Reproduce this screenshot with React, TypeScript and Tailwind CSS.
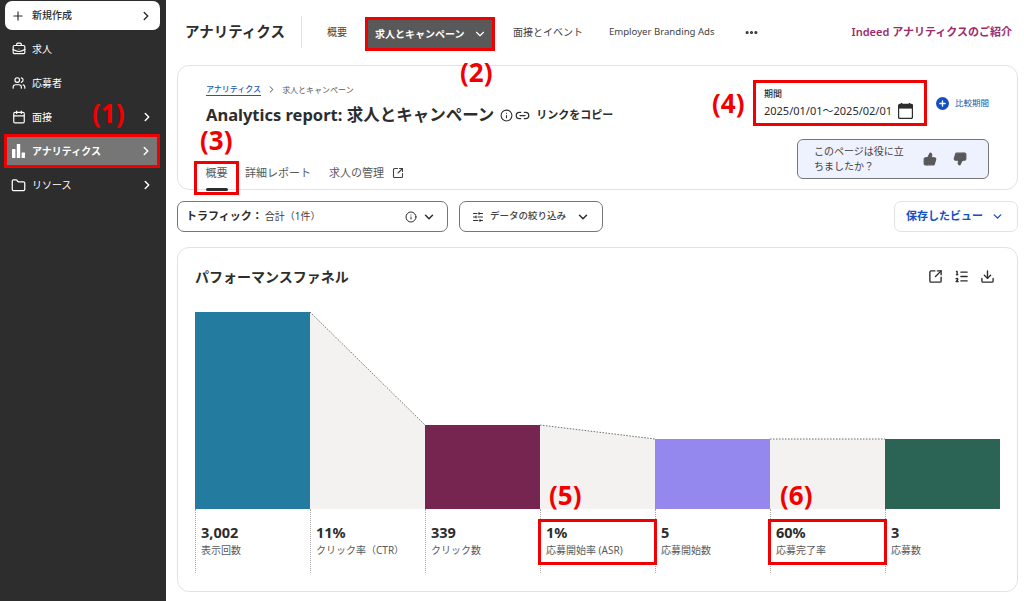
import {
  BriefcaseBusiness,
  Calendar,
  ChevronDown,
  ChevronRight,
  Download,
  Folder,
  Info,
  Link2,
  ListOrdered,
  MoreHorizontal,
  Plus,
  SlidersHorizontal,
  SquareArrowOutUpRight,
  ThumbsDown,
  ThumbsUp,
  Users,
} from "lucide-react";

const sideItems = [
  { label: "求人", icon: BriefcaseBusiness, arrow: false },
  { label: "応募者", icon: Users, arrow: false },
  { label: "面接", icon: Calendar, arrow: true },
];

const funnelStats = [
  { value: "3,002", label: "表示回数" },
  { value: "11%", label: "クリック率（CTR）" },
  { value: "339", label: "クリック数" },
  { value: "1%", label: "応募開始率 (ASR)", boxed: true },
  { value: "5", label: "応募開始数" },
  { value: "60%", label: "応募完了率", boxed: true },
  { value: "3", label: "応募数" },
];

function Mark({ text, className }: { text: string; className: string }) {
  return (
    <span
      className={`absolute text-[26px] leading-none font-bold text-[#f00000] ${className}`}
    >
      {text}
    </span>
  );
}

function BarsIcon() {
  return (
    <svg viewBox="0 0 13 14" className="h-[14px] w-[13px] fill-white">
      <rect x="0" y="5" width="3.4" height="9" rx="0.5" />
      <rect x="4.8" y="0" width="3.4" height="14" rx="0.5" />
      <rect x="9.6" y="8.5" width="3.4" height="5.5" rx="0.5" />
    </svg>
  );
}

function DateIcon() {
  return (
    <svg viewBox="0 0 15 16" className="ml-[6px] h-[16px] w-[15px] text-[#2d2d2d]">
      <path d="M3.5 0v3M11.5 0v3" stroke="currentColor" strokeWidth="1.6" />
      <path
        d="M2 1.5h11a1.5 1.5 0 0 1 1.5 1.5v11a1.5 1.5 0 0 1-1.5 1.5H2A1.5 1.5 0 0 1 .5 14V3A1.5 1.5 0 0 1 2 1.5Z"
        fill="none"
        stroke="currentColor"
        strokeWidth="1.4"
      />
      <rect x="1" y="2" width="13" height="3.6" fill="currentColor" />
    </svg>
  );
}

function Sidebar() {
  return (
    <aside className="relative w-[166px] shrink-0 bg-[#2d2d2d] px-[5px] pt-[1px] text-white">
      <button className="flex h-[29px] w-[155px] items-center rounded-[7px] bg-white pl-[6px] pr-[7px] text-[#2d2d2d]">
        <Plus size={14} strokeWidth={2} />
        <span className="ml-[7px] text-[10px] font-medium">新規作成</span>
        <ChevronRight size={14} strokeWidth={2.5} className="ml-auto" />
      </button>
      <div className="mt-[2px]">
        {sideItems.map((item) => (
          <div key={item.label} className="flex h-[34px] items-center pl-[7px] pr-[7px]">
            <item.icon size={14} strokeWidth={2} />
            <span className="ml-[6px] text-[10px]">{item.label}</span>
            {item.arrow && <ChevronRight size={14} strokeWidth={2.5} className="ml-auto" />}
          </div>
        ))}
        <div className="-ml-[1px] flex h-[34px] w-[156px] items-center border-[3px] border-[#f00000] bg-[#767676] pl-[5px] pr-[4px]">
          <BarsIcon />
          <span className="ml-[7px] text-[10px] font-bold">アナリティクス</span>
          <ChevronRight size={14} strokeWidth={2.5} className="ml-auto" />
        </div>
        <div className="flex h-[34px] items-center pl-[6px] pr-[7px]">
          <Folder size={15} strokeWidth={2} />
          <span className="ml-[6px] text-[10px]">リソース</span>
          <ChevronRight size={14} strokeWidth={2.5} className="ml-auto" />
        </div>
      </div>
      <Mark text="(1)" className="left-[92px] top-[100px]" />
    </aside>
  );
}

function TopNav() {
  return (
    <nav className="relative flex h-[64px] items-center pl-[19px] pr-[12px] text-[#424242]">
      <h1 className="text-[14.5px] font-bold text-[#2d2d2d]">アナリティクス</h1>
      <div className="ml-[16px] h-[32px] w-px bg-[#e4e2e0]" />
      <span className="ml-[25px] text-[10px]">概要</span>
      <div className="ml-[18px] mt-[4px] flex h-[34px] w-[130px] items-center border-[3px] border-[#f00000] bg-[#595959] pl-[7px] text-[10px] font-bold text-white">
        求人とキャンペーン
        <ChevronDown size={14} strokeWidth={2} className="ml-[9px]" />
      </div>
      <span className="ml-[18px] text-[10px]">面接とイベント</span>
      <span className="ml-[26px] text-[9.6px]">Employer Branding Ads</span>
      <MoreHorizontal size={15} strokeWidth={3} className="ml-[29px] text-[#2d2d2d]" />
      <span className="ml-auto text-[11px] font-semibold text-[#9d2b6b]">Indeed アナリティクスのご紹介</span>
    </nav>
  );
}

function ReportHeader() {
  return (
    <section className="relative ml-[11px] mr-[6px] mt-[1px] flex h-[125px] justify-between rounded-[12px] border border-[#e4e2e0] bg-white pl-[28px] pr-[28px]">
      <div className="flex flex-col">
        <div className="mt-[17px] flex items-center text-[8px] text-[#595959]">
          <span className="border-b border-[#2557a7] font-medium text-[#2557a7]">アナリティクス</span>
          <ChevronRight size={11} strokeWidth={2} className="mx-[5px] text-[#424242]" />
          <span>求人とキャンペーン</span>
        </div>
        <div className="mt-[7px] flex items-center text-[#2d2d2d]">
          <h2 className="text-[16.5px] font-bold">Analytics report: 求人とキャンペーン</h2>
          <Info size={13} strokeWidth={2} className="ml-[6px]" />
          <Link2 size={15} strokeWidth={2} className="ml-[2px]" />
          <span className="ml-[6px] text-[11px] font-bold">リンクをコピー</span>
        </div>
        <div className="mt-[33px] flex text-[11px] text-[#595959]">
          <div className="relative -ml-[12px] flex h-[34px] w-[45px] justify-center border-[3px] border-[#f00000] pt-[1px]">
            概要
            <span className="absolute bottom-[1px] left-[9px] h-[3px] w-[22px] rounded-full bg-[#2d2d2d]" />
          </div>
          <span className="ml-[6px] mt-[4px]">詳細レポート</span>
          <span className="ml-[18px] mt-[4px] flex items-start">
            求人の管理
            <SquareArrowOutUpRight size={12} strokeWidth={2.2} className="ml-[8px] mt-[2px] text-[#424242]" />
          </span>
        </div>
      </div>
      <div className="flex flex-col items-end">
        <div className="mt-[14px] flex items-center">
          <div className="flex h-[46px] w-[174px] flex-col justify-center border-[3px] border-[#f00000] pl-[8px] text-[#2d2d2d]">
            <span className="text-[9px] font-medium">期間</span>
            <div className="mt-[2px] flex items-center text-[11px]">
              2025/01/01〜2025/02/01
              <DateIcon />
            </div>
          </div>
          <div className="ml-[9px] flex items-center text-[8.5px] text-[#2557a7]">
            <span className="flex size-[13px] items-center justify-center rounded-full bg-[#164fc4] text-white">
              <Plus size={9} strokeWidth={3.5} />
            </span>
            <span className="ml-[6px]">比較期間</span>
          </div>
        </div>
        <div className="mt-[13px] flex h-[40px] w-[192px] items-center rounded-[6px] border border-[#767676] bg-[#eef1fe] pl-[16px] text-[10px] leading-[15px] text-[#424242]">
          <span className="w-[92px]">このページは役に立ちましたか？</span>
          <ThumbsUp size={14} fill="#595959" stroke="#595959" className="ml-[17px]" />
          <ThumbsDown size={14} fill="#595959" stroke="#595959" className="ml-[16px]" />
        </div>
      </div>
      <Mark text="(2)" className="left-[282px] -top-[7px]" />
      <Mark text="(3)" className="left-[22px] top-[61px]" />
      <Mark text="(4)" className="left-[534px] top-[24px]" />
    </section>
  );
}

function FilterRow() {
  return (
    <div className="ml-[11px] mr-[6px] mt-[11px] flex h-[31px] items-center text-[#2d2d2d]">
      <div className="flex h-full w-[271px] items-center rounded-[7px] border border-[#767676] pl-[8px] pr-[11px]">
        <span className="text-[11px] font-bold">トラフィック：</span>
        <span className="ml-[2px] text-[10px] text-[#424242]">合計（1件）</span>
        <Info size={12} strokeWidth={2} className="ml-auto" />
        <ChevronDown size={14} strokeWidth={2.5} className="ml-[5px]" />
      </div>
      <div className="ml-[11px] flex h-full w-[144px] items-center rounded-[7px] border border-[#767676] pl-[12px]">
        <SlidersHorizontal size={12} strokeWidth={2} />
        <span className="ml-[6px] text-[9.5px] font-medium text-[#424242]">データの絞り込み</span>
        <ChevronDown size={14} strokeWidth={2.5} className="ml-[10px]" />
      </div>
      <div className="ml-auto flex h-full w-[124px] items-center rounded-[7px] border border-[#e4e2e0] pl-[11px] text-[#164fc4]">
        <span className="text-[11px] font-bold">保存したビュー</span>
        <ChevronDown size={13} strokeWidth={2.5} className="ml-[8px]" />
      </div>
    </div>
  );
}

function FunnelChart() {
  return (
    <svg viewBox="0 0 805 197" className="block h-[197px] w-[805px]">
      <polygon points="115,0 230,113 230,197 115,197" fill="#f3f2f1" />
      <polygon points="345,113 460,127 460,197 345,197" fill="#f3f2f1" />
      <polygon points="575,127 690,127 690,197 575,197" fill="#f3f2f1" />
      <rect x="0" y="0" width="115" height="197" fill="#247ba0" />
      <rect x="230" y="113" width="115" height="84" fill="#75254f" />
      <rect x="460" y="127" width="115" height="70" fill="#9488ee" />
      <rect x="690" y="127" width="115" height="70" fill="#2b6355" />
      <g stroke="#6f6f6f" strokeWidth="1" strokeDasharray="1.5 1.5" fill="none">
        <line x1="115" y1="0" x2="230" y2="113" />
        <line x1="345" y1="113" x2="460" y2="127" />
        <line x1="575" y1="127" x2="690" y2="127" />
      </g>
    </svg>
  );
}

function FunnelCard() {
  return (
    <section className="relative ml-[11px] mr-[6px] mt-[15px] h-[345px] rounded-[12px] border border-[#e4e2e0] bg-white pl-[17px] pr-[22px]">
      <div className="mt-[18px] flex items-center justify-between text-[#2d2d2d]">
        <h3 className="text-[14px] font-bold">パフォーマンスファネル</h3>
        <div className="flex items-center gap-[11px]">
          <SquareArrowOutUpRight size={15} strokeWidth={2.2} />
          <ListOrdered size={15} strokeWidth={2.2} />
          <Download size={15} strokeWidth={2.2} />
        </div>
      </div>
      <div className="mt-[25px]">
        <FunnelChart />
      </div>
      <div className="grid w-[807px] [grid-template-columns:repeat(7,115px)]">
        {funnelStats.map((s) => (
          <div key={s.label} className="h-[64px] border-l border-dotted border-[#a8a6a5] pl-[5px] pt-[10px]">
            <div
              className={`relative z-10 ${s.boxed ? "-ml-[8px] h-[46px] w-[119px] border-[3px] border-[#f00000] pl-[5px]" : "h-[48px] pt-[3px]"}`}
            >
              <div className="text-[14.5px] leading-[20px] font-bold text-[#2d2d2d]">{s.value}</div>
              <div className="mt-[1px] text-[10px] leading-[14px] text-[#595959]">{s.label}</div>
            </div>
          </div>
        ))}
      </div>
      <Mark text="(5)" className="left-[371px] top-[234px]" />
      <Mark text="(6)" className="left-[602px] top-[234px]" />
    </section>
  );
}

export default function App() {
  return (
    <div className="flex h-[601px] w-[1024px] overflow-hidden bg-white font-['Noto_Sans','Noto_Sans_CJK_JP',sans-serif]">
      <Sidebar />
      <main className="min-w-0 flex-1">
        <TopNav />
        <ReportHeader />
        <FilterRow />
        <FunnelCard />
      </main>
    </div>
  );
}
